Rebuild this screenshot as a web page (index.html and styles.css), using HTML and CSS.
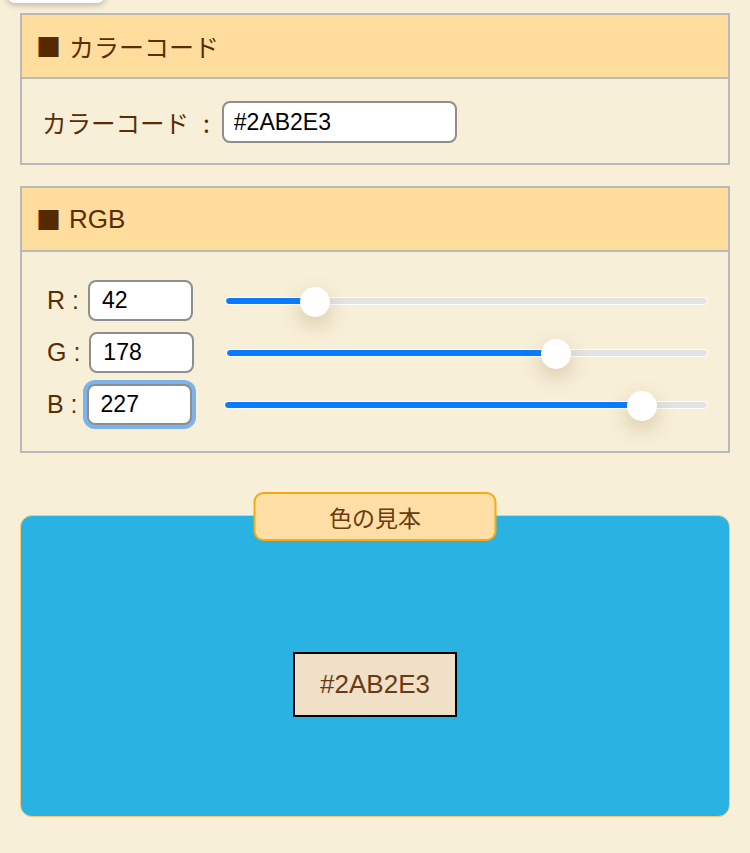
FILE: index.html
```html
<!DOCTYPE html>
<html lang="ja">
<head>
    <meta charset="UTF-8">
    <meta name="viewport" content="width=device-width, initial-scale=1.0">
    <title>カラーコード変換</title>
    <link rel="stylesheet" href="styles.css">
</head>
<body>
    <div class="top-button"></div>

    <!-- カラーコード入力 -->
    <section class="panel">
        <h2 class="panel-title"><span class="mark">■</span>カラーコード</h2>
        <div class="panel-body code-row">
            <label class="code-label" for="code">カラーコード<span class="colon">:</span></label>
            <input id="code" class="text-input code-input" type="text" value="#2AB2E3">
        </div>
    </section>

    <!-- RGB入力 -->
    <section class="panel">
        <h2 class="panel-title"><span class="mark">■</span><span class="latin">RGB</span></h2>
        <div class="panel-body rgb-body">
            <div class="rgb-row">
                <label class="rgb-label" for="r">R :</label>
                <input id="r" class="text-input num-input" type="text" value="42">
                <input class="slider" type="range" min="0" max="255" value="42" style="--p: 16.5%">
            </div>
            <div class="rgb-row">
                <label class="rgb-label" for="g">G :</label>
                <input id="g" class="text-input num-input" type="text" value="178">
                <input class="slider" type="range" min="0" max="255" value="178" style="--p: 69.8%">
            </div>
            <div class="rgb-row">
                <label class="rgb-label" for="b">B :</label>
                <input id="b" class="text-input num-input is-focused" type="text" value="227">
                <input class="slider" type="range" min="0" max="255" value="227" style="--p: 89%">
            </div>
        </div>
    </section>

    <!-- 色の見本 -->
    <section class="sample" style="background: #2AB2E3">
        <div class="sample-tag">色の見本</div>
        <div class="sample-code">#2AB2E3</div>
    </section>
</body>
</html>
```

FILE: styles.css
```css
body {
    margin: 0;
    padding: 0 20px;
    background: #f8efd8;
    color: #5a2d06;
    font-family: "Liberation Sans", "Noto Sans CJK JP", sans-serif;
}

.top-button {
    width: 98px;
    height: 40px;
    margin: -37px 0 10px -13px;
    background: white;
    border-radius: 8px;
    box-shadow: 0 2px 6px rgba(0, 0, 0, 0.25);
}

.panel {
    border: 2px solid #b9b9b9;
    margin-bottom: 21px;
}

.panel-title {
    margin: 0;
    height: 62px;
    display: flex;
    align-items: center;
    padding-left: 14px;
    background: #ffdd9c;
    border-bottom: 2px solid #b9b9b9;
    font-family: "Noto Sans CJK JP", sans-serif;
    font-size: 25px;
    font-weight: normal;
    color: #5a2d06;
}

.mark {
    font-size: 25px;
    margin-right: 8px;
    color: #552a00;
}

.latin {
    font-family: "Liberation Sans", sans-serif;
    font-size: 26px;
}

.code-row {
    display: flex;
    align-items: center;
    padding: 22px 20px 20px;
}

.code-label {
    font-family: "Noto Sans CJK JP", sans-serif;
    font-size: 24.5px;
    margin-right: 12px;
}

.colon {
    margin-left: 14px;
}

.text-input {
    box-sizing: border-box;
    height: 42px;
    border: 2px solid #8e8e8e;
    border-radius: 8px;
    background: white;
    font-family: "Liberation Sans", sans-serif;
    font-size: 23px;
    color: black;
    padding: 0 10px;
    outline: none;
}

.code-input {
    width: 235px;
}

.rgb-body {
    padding: 28px 20px 26px 25px;
    display: flex;
    flex-direction: column;
    gap: 11px;
}

.rgb-row {
    display: flex;
    align-items: center;
}

.rgb-label {
    font-size: 25px;
    margin-right: 9px;
}

.num-input {
    width: 105px;
    height: 41px;
    padding: 0 12px;
}

.is-focused {
    box-shadow: 0 0 0 4px #7cb4ea;
}

.slider {
    -webkit-appearance: none;
    appearance: none;
    flex: 1;
    margin: 0 0 0 32px;
    height: 30px;
    background: transparent;
}

.slider::-webkit-slider-runnable-track {
    height: 8px;
    border: 1px solid white;
    border-radius: 5px;
    background: linear-gradient(to right, #0a7bff var(--p), #e3e3e3 var(--p));
}

.slider::-webkit-slider-thumb {
    -webkit-appearance: none;
    width: 30px;
    height: 30px;
    margin-top: -11px;
    border-radius: 50%;
    background: white;
    box-shadow: 0 8px 20px rgba(120, 90, 30, 0.26);
}

.sample {
    position: relative;
    box-sizing: border-box;
    height: 302px;
    margin-top: 62px;
    padding-top: 37px;
    border: 1px solid #f7c97c;
    border-radius: 12px;
    display: flex;
    align-items: center;
    justify-content: center;
}

.sample-tag {
    position: absolute;
    top: -24px;
    left: 50%;
    transform: translateX(-50%);
    box-sizing: border-box;
    width: 243px;
    height: 49px;
    display: flex;
    align-items: center;
    justify-content: center;
    background: #ffdfa5;
    border: 2px solid #f7aa10;
    border-radius: 10px;
    font-family: "Noto Sans CJK JP", sans-serif;
    font-size: 23px;
    color: #6a3a10;
}

.sample-code {
    box-sizing: border-box;
    width: 164px;
    height: 65px;
    display: flex;
    align-items: center;
    justify-content: center;
    background: #f0e0c8;
    border: 2px solid black;
    font-size: 26px;
    color: #6a3a10;
}
```
